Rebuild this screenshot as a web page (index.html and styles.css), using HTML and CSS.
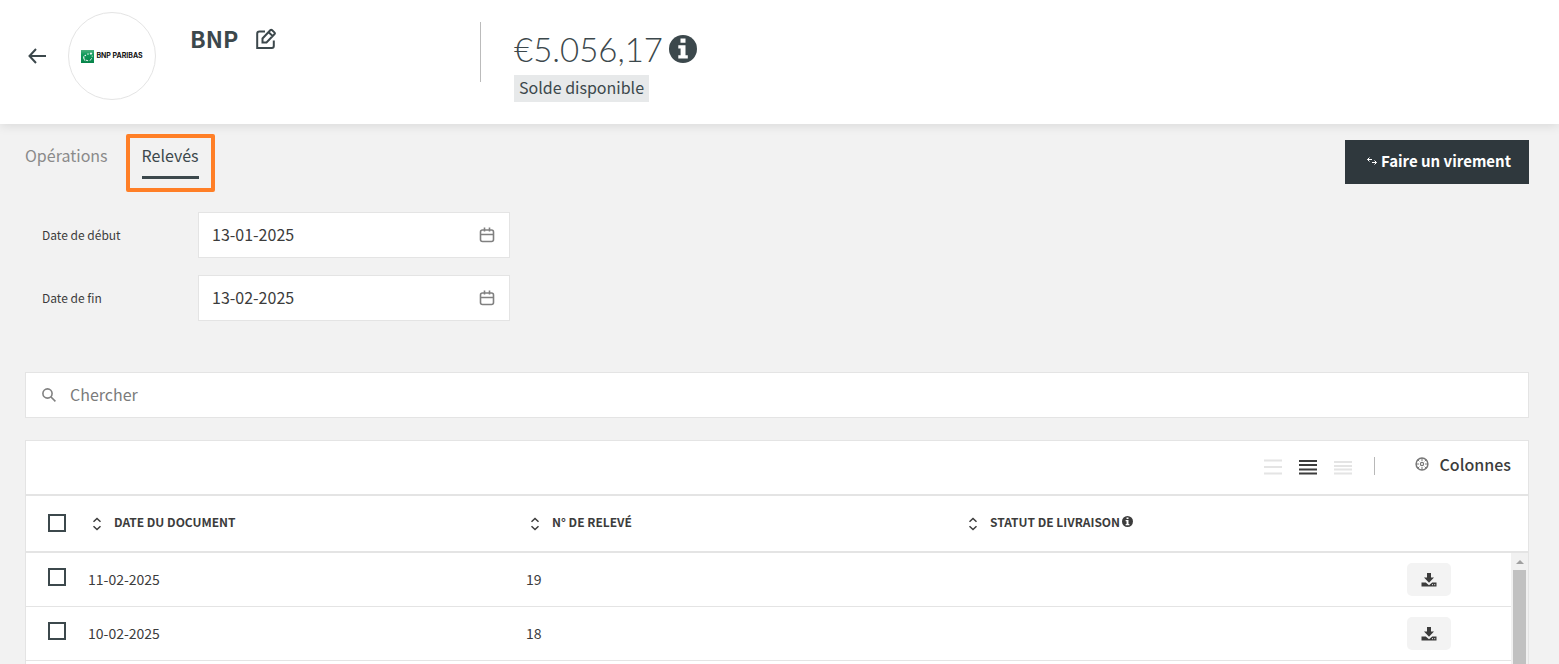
FILE: index.html
```html
<!DOCTYPE html>
<html lang="fr">
<head>
<meta charset="utf-8">
<title>BNP – Relevés</title>
<link rel="stylesheet" href="styles.css">
</head>
<body>
<svg class="defs" aria-hidden="true">
  <symbol id="calendar" viewBox="0 0 16 16"><path d="M3.500 3h9Q14.500 3 14.500 5v7.500q0 2-2 2h-9q-2 0-2-2V5q0-2 2-2zM1.500 7.500h13M5.500 .5v4M10.500 .5v4" fill="none" stroke="currentColor" stroke-width="1.600"/></symbol>
  <symbol id="sort" viewBox="0 0 10 14"><path d="M1.500 4.800 5 1.500l3.500 3.300M1.500 9.200 5 12.500l3.500-3.300" fill="none" stroke="currentColor" stroke-width="1.500"/></symbol>
  <symbol id="info" viewBox="0 0 28 28"><circle cx="14" cy="14" r="14" fill="currentColor"/><path d="M11.500 3.500h5v4.200h-5zM9.300 10.300h7.200v10h2.300v3.200H9.300v-3.200h2.300v-6.800H9.300z" fill="#fff"/></symbol>
  <symbol id="download" viewBox="0 0 16 14"><path d="M6 0h4v4.500h3L8 9.700 3 4.500h3zM.5 9.500h4.300L8 12.200l3.200-2.700h4.300v4H.5z" fill="currentColor"/><path d="M11 11.700h1M13.200 11.700h1" stroke="#f3f3f3"/></symbol>
</svg>

<header class="account-header">
  <div class="identity">
    <button class="icon-button back" aria-label="Retour"><svg width="18" height="16" viewBox="0 0 18 16"><path d="M18 8H1.500M8 1 1.500 8 8 15" fill="none" stroke="currentColor" stroke-width="2"/></svg></button>
    <div class="logo">
      <svg width="13" height="13" viewBox="0 0 13 13"><defs><linearGradient id="green" x2="0" y2="1"><stop stop-color="#4db07e"/><stop offset=".35" stop-color="#129a5b"/><stop offset="1" stop-color="#078349"/></linearGradient></defs><path d="M0 0h13v13H0z" fill="url(#green)"/><g fill="#fff"><path d="m10 2 .5 1 1 .2-.8.600.2 1L10 4.300l-1 .5.200-1-.7-.6 1-.2zM7 3l.3.700.8.100-.6.500.1.700L7 4.600l-.7.400.2-.7-.6-.5.800-.1zM4.200 4.400l.4.600.7.100-.5.500.1.700-.7-.4-.6.400.1-.7-.5-.5.700-.1z"/><path d="M2.300 6.300c-.3 2 .2 3.800 2.200 5.200C3.600 9.700 3.200 8.200 3.300 6.500zM4.700 9.600l2.600 1-.3.700-2.300-.8zM8.400 10.500 10.800 8l.3.600-2 2.100zM10.500 6l1-.8-.2 2z"/></g></svg>
      <span>BNP PARIBAS</span>
    </div>
    <h1>BNP</h1>
    <button class="icon-button edit" aria-label="Modifier"><svg width="22" height="22" viewBox="0 0 22 22" fill="none" stroke="currentColor" stroke-width="2"><path d="M10 3.500H4.500Q2.200 3.500 2.200 5.800V20h14.600q2 0 2-2v-5.500"/><path d="M7.500 14.500v-4l8-8.500q.7-.7 1.400 0l2.700 2.600q.7.700 0 1.400l-8.100 8.500zM14.200 4.700l3.300 3.200"/></svg></button>
  </div>
  <div class="balance">
    <div class="amount"><span>€5.056,17</span><svg width="28" height="28" role="img" aria-label="Information"><use href="#info"/></svg></div>
    <span class="badge">Solde disponible</span>
  </div>
</header>

<main>
  <div class="top-row">
    <nav class="tabs">
      <a class="tab" href="#operations">Opérations</a>
      <div class="highlight"><a class="tab active" href="#releves" aria-current="page">Relevés</a></div>
    </nav>
    <button class="primary"><svg width="12" height="10" viewBox="0 0 12 10" fill="none" stroke="currentColor"><path d="M6 3.500H1.500M3.500 1.500l-2 2 2 2M6 6.500h4.500M8.500 4.500l2 2-2 2"/></svg><span>Faire un virement</span></button>
  </div>

  <form class="filters">
    <label for="start">Date de début</label>
    <div class="field"><input id="start" type="text" value="13-01-2025"><svg width="16" height="16"><use href="#calendar"/></svg></div>
    <label for="end">Date de fin</label>
    <div class="field"><input id="end" type="text" value="13-02-2025"><svg width="16" height="16"><use href="#calendar"/></svg></div>
  </form>

  <div class="search">
    <svg width="14" height="14" viewBox="0 0 14 14" fill="none" stroke="currentColor" stroke-width="1.600"><circle cx="5.500" cy="5.500" r="4.600"/><path d="m9 9 4.400 4.400"/></svg>
    <input type="search" placeholder="Chercher" aria-label="Chercher">
  </div>

  <section class="card">
    <div class="toolbar">
      <div class="density">
        <button class="icon-button" aria-label="Affichage large"><svg width="18" height="16"><path d="M0 1.500h18M0 8h18M0 14.500h18" stroke="#e4e4e4" stroke-width="2"/></svg></button>
        <button class="icon-button" aria-label="Affichage moyen" aria-pressed="true"><svg width="18" height="16"><path d="M0 2h18M0 6h18M0 10.500h18M0 14.500h18" stroke="#3c3c3c" stroke-width="2"/></svg></button>
        <button class="icon-button" aria-label="Affichage compact"><svg width="18" height="16"><path d="M0 3h18M0 7h18M0 10.500h18M0 14.500h18" stroke="#e4e4e4" stroke-width="2"/></svg></button>
      </div>
      <button class="columns"><svg width="14" height="14" viewBox="0 0 14 14" fill="none" stroke="currentColor"><circle cx="7" cy="7" r="5.900" stroke-width="1.500"/><circle cx="7" cy="7" r="1.600" stroke-width="1.200"/><path d="M7 1v3M7 10v3M1 7h3M10 7h3M2.800 2.800l1.500 1.500M9.700 9.700l1.500 1.500M11.200 2.800 9.700 4.300M4.300 9.700l-1.500 1.500"/></svg>Colonnes</button>
    </div>
    <div class="table-area">
      <table>
        <colgroup><col class="col-check"><col><col><col><col class="col-action"></colgroup>
        <thead>
          <tr>
            <th><input type="checkbox" aria-label="Tout sélectionner"></th>
            <th><button class="sort"><svg width="10" height="14"><use href="#sort"/></svg><span>DATE DU DOCUMENT</span></button></th>
            <th><button class="sort"><svg width="10" height="14"><use href="#sort"/></svg><span>N° DE RELEVÉ</span></button></th>
            <th><button class="sort"><svg width="10" height="14"><use href="#sort"/></svg><span class="with-info">STATUT DE LIVRAISON<svg width="11" height="11"><use href="#info" width="11" height="11"/></svg></span></button></th>
            <th></th>
          </tr>
        </thead>
        <tbody>
          <tr>
            <td><input type="checkbox" aria-label="Relevé 19"></td>
            <td>11-02-2025</td><td>19</td><td></td>
            <td><button class="download" aria-label="Télécharger le relevé 19"><svg width="16" height="14"><use href="#download"/></svg></button></td>
          </tr>
          <tr>
            <td><input type="checkbox" aria-label="Relevé 18"></td>
            <td>10-02-2025</td><td>18</td><td></td>
            <td><button class="download" aria-label="Télécharger le relevé 18"><svg width="16" height="14"><use href="#download"/></svg></button></td>
          </tr>
        </tbody>
      </table>
      <div class="scrollbar"><svg width="8" height="4"><path d="M0 4 4 0l4 4z" fill="#a0a0a0"/></svg><div class="thumb"></div></div>
    </div>
  </section>
</main>
</body>
</html>
```

FILE: styles.css
```css
* { box-sizing: border-box; }

body {
  margin: 0;
  height: 100vh;
  display: flex;
  flex-direction: column;
  overflow: hidden;
  background: #f2f2f2;
  color: #3c3c3c;
  font: 16px/24px "Noto Sans CJK SC", "Noto Sans", sans-serif;
}

button, input { font: inherit; color: inherit; }
button { border: 0; padding: 0; background: none; cursor: pointer; }
svg { display: block; flex: none; }
.defs { position: absolute; width: 0; height: 0; }
.icon-button { color: #3c484c; }

.account-header {
  flex: none;
  display: flex;
  align-items: flex-start;
  height: 124px;
  padding: 12px 28px;
  background: #fff;
  box-shadow: 0 2px 10px rgba(0, 0, 0, .1);
}

.identity { display: flex; align-items: flex-start; width: 452px; }
.back { margin: 36px 22px 0 0; }

.logo {
  display: flex;
  align-items: center;
  justify-content: center;
  gap: 2px;
  width: 88px;
  height: 88px;
  margin-right: 34px;
  border: 1px solid #e4e4e4;
  border-radius: 50%;
  color: #111;
  font: 700 7px/12px Inter, sans-serif;
  white-space: nowrap;
}

h1 {
  margin: 10px 17px 0 0;
  color: #3c484c;
  font-size: 23px;
  line-height: 32px;
}
.edit { margin-top: 16px; }

.balance {
  position: relative;
  padding: 18px 0 0 34px;
}
.balance::before {
  content: "";
  position: absolute;
  left: 0;
  top: 10px;
  height: 60px;
  border-left: 1px solid #bbb;
}

.amount {
  display: flex;
  align-items: center;
  gap: 6px;
  height: 38px;
  color: #3c484c;
  font: 300 33px/38px Lato, sans-serif;
}

.badge {
  display: block;
  width: max-content;
  margin-top: 7px;
  padding: 0 5px 2px;
  background: #e7e9ea;
  color: #3c484c;
  line-height: 25px;
}

main {
  flex: 1;
  min-height: 0;
  display: flex;
  flex-direction: column;
  padding: 10px 30px 0 25px;
}

.top-row {
  display: flex;
  justify-content: space-between;
  align-items: flex-start;
}
.tabs { display: flex; gap: 18px; }
.tab { margin-top: 9px; color: #8a8a8a; text-decoration: none; }
.highlight {
  padding: 5px 12px 9px;
  border: 4px solid #ff7f27;
  border-radius: 2px;
}
.tab.active {
  display: block;
  margin: 0;
  padding-bottom: 9px;
  border-bottom: 3px solid #3c484c;
  color: #3c484c;
}

.primary {
  display: flex;
  align-items: center;
  gap: 3px;
  height: 44px;
  margin-top: 6px;
  padding: 0 18px 2px 21px;
  background: #2f383d;
  color: #fff;
  font-size: 15px;
  font-weight: 700;
}

.filters {
  display: grid;
  grid-template-columns: 156px 312px;
  row-gap: 17px;
  align-items: center;
  margin-top: 20px;
  padding-left: 17px;
}
.filters label { font-size: 12px; }
.field, .search {
  display: flex;
  align-items: center;
  height: 46px;
  border: 1px solid #e4e4e4;
  background: #fff;
  color: #808080;
}
.field { padding: 0 14px 0 13px; }
.field input, .search input {
  flex: 1;
  min-width: 0;
  height: 26px;
  border: 0;
  padding: 0 0 2px;
  outline: 0;
  background: none;
  color: #3c3c3c;
}
.search {
  flex: none;
  gap: 14px;
  margin-top: 51px;
  padding: 0 16px;
}
.search input::placeholder { color: #7b7b7b; opacity: 1; }

.card {
  flex: 1;
  min-height: 0;
  display: flex;
  flex-direction: column;
  margin-top: 22px;
  border: 1px solid #e4e4e4;
  border-bottom: 0;
  background: #fff;
}

.toolbar {
  flex: none;
  display: flex;
  justify-content: flex-end;
  align-items: center;
  height: 55px;
  padding: 0 17px 4px 0;
  border-bottom: 2px solid #e4e4e4;
}
.density {
  display: flex;
  gap: 17px;
  padding: 2px 22px 0 0;
  border-right: 1px solid #b8b8b8;
}
.columns {
  display: flex;
  align-items: center;
  gap: 11px;
  margin-left: 40px;
  padding-bottom: 3px;
  font-weight: 500;
}
.columns svg { color: #777; }

.table-area {
  position: relative;
  flex: 1;
  min-height: 0;
  overflow: hidden;
}
table {
  width: 100%;
  table-layout: fixed;
  border-collapse: separate;
  border-spacing: 0;
  font-size: 14px;
}
.col-check { width: 62px; }
.col-action { width: 126px; }
th { height: 57px; padding: 0; border-bottom: 2px solid #e4e4e4; text-align: left; }
td { height: 54px; padding: 0 0 2px; border-bottom: 1px solid #e4e4e4; }
td:last-child { padding: 0; }
th:first-child { padding: 0 0 2px 22px; }
td:first-child { padding: 0 0 6px 22px; }

input[type="checkbox"] {
  appearance: none;
  display: block;
  width: 18px;
  height: 18px;
  margin: 0;
  border: 2px solid #3c484c;
  background: #fff;
}

.sort {
  display: flex;
  align-items: center;
  gap: 12px;
  padding-left: 4px;
  font-size: 12px;
  font-weight: 700;
  line-height: 20px;
}
.sort span { padding-bottom: 4px; }
.with-info { display: flex; align-items: center; gap: 2px; }

.download {
  display: grid;
  place-items: center;
  width: 44px;
  height: 33px;
  margin-left: 5px;
  border-radius: 5px;
  background: #f3f3f3;
}

.scrollbar {
  position: absolute;
  top: 57px;
  right: 0;
  bottom: 0;
  width: 17px;
  display: flex;
  flex-direction: column;
  align-items: center;
  gap: 6px;
  padding-top: 7px;
  background: #f1f1f1;
}
.thumb { flex: 1; width: 13px; background: #c1c1c1; }
```
